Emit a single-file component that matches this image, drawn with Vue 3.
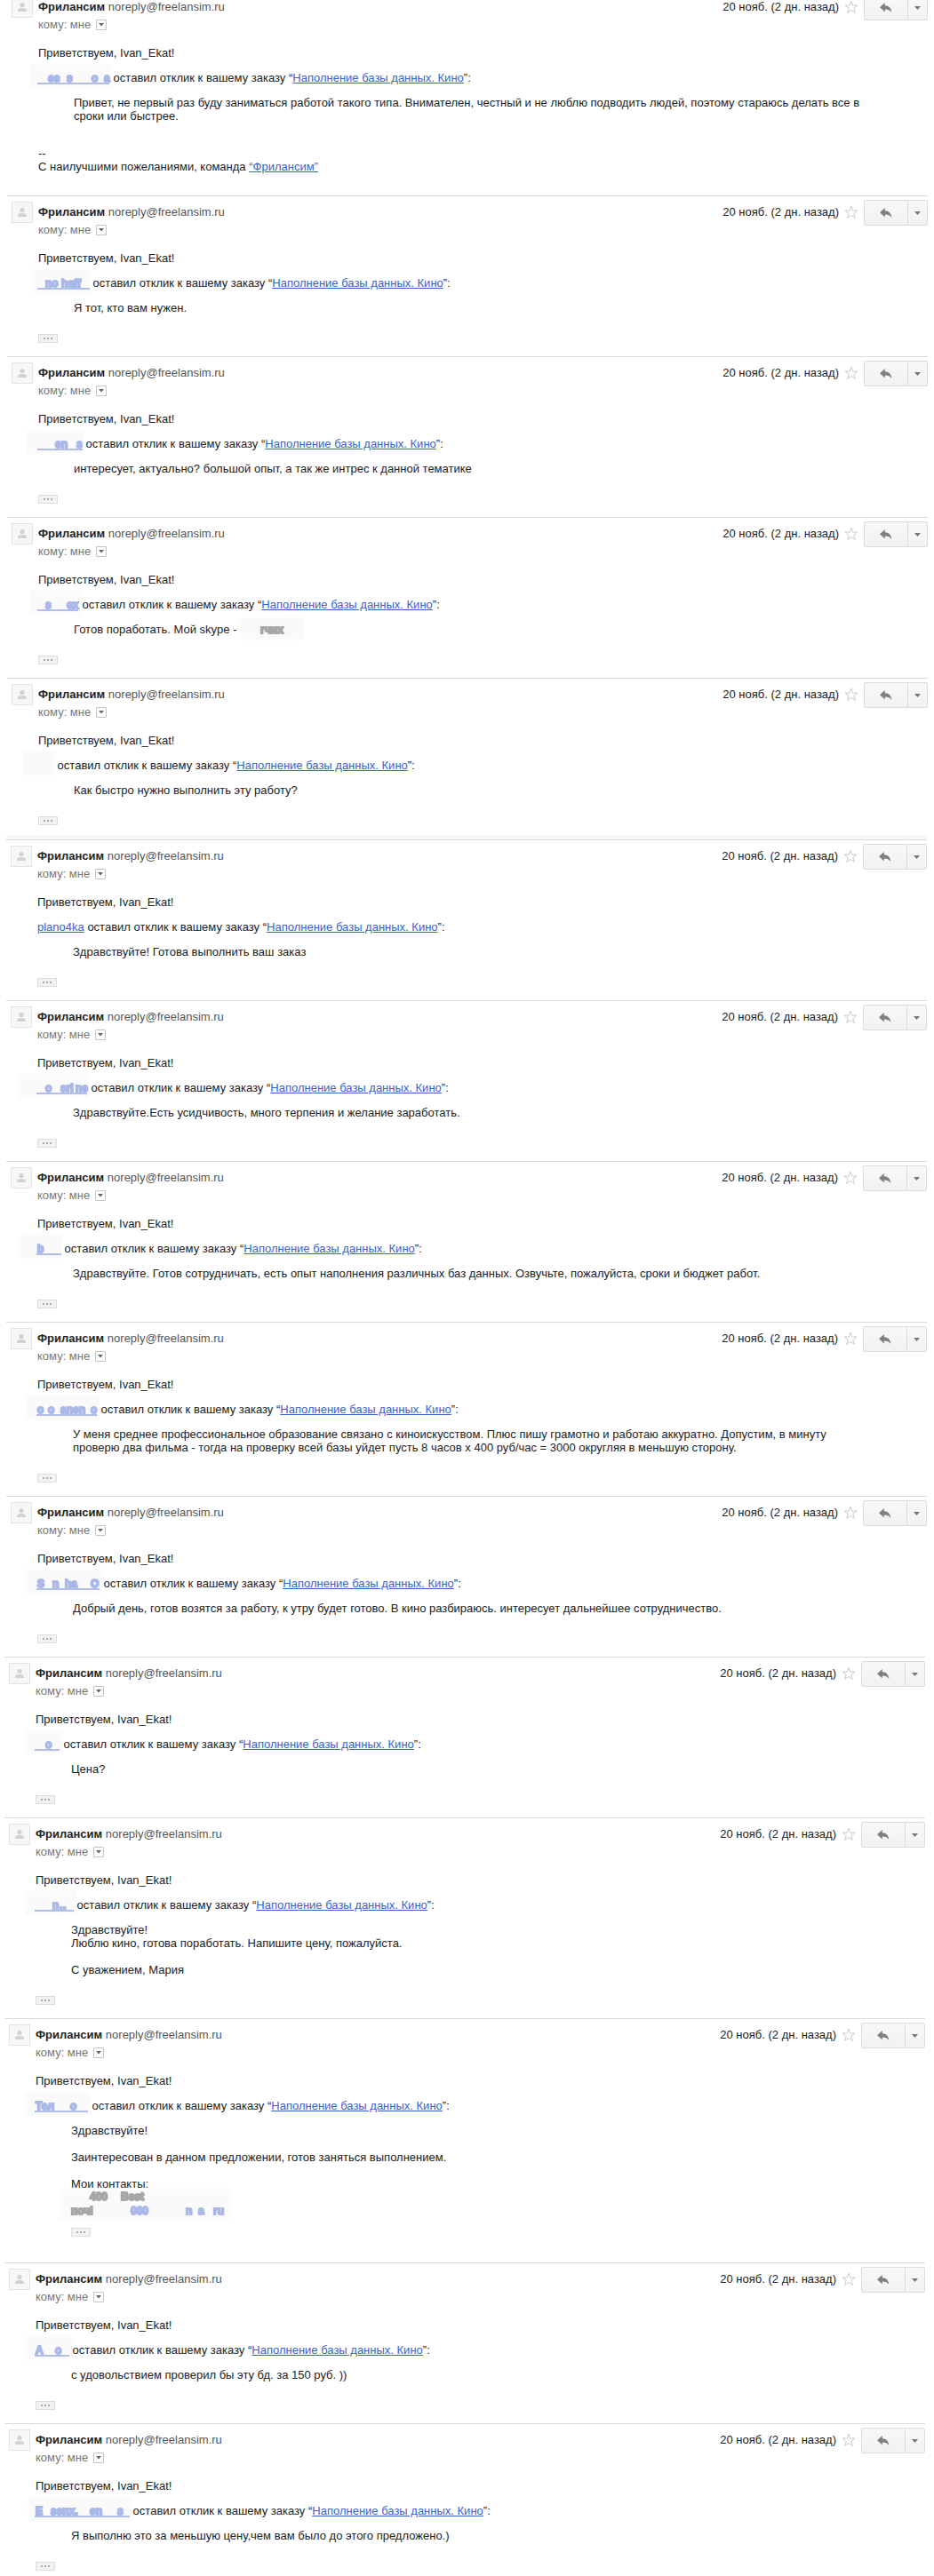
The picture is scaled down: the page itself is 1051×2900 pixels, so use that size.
<script setup>
const threads = [
  {
    name: 'first',
    messages: [
      {
        mask: { w: 81, left: -9, right: 82, line: 80, marks: [[11, 'es'], [32, 's'], [60, 'o'], [74, 'a']] },
        reply: 'Привет, не первый раз буду заниматься работой такого типа. Внимателен, честный и не люблю подводить людей, поэтому стараюсь делать все в\nсроки или быстрее.',
        signature: true
      },
      {
        mask: { w: 58, left: -6, right: 60, line: 58, marks: [[8, 'no'], [26, 'haff']] },
        reply: 'Я тот, кто вам нужен.'
      },
      {
        mask: { w: 50, left: -13, right: 51, line: 50, marks: [[19, 'en'], [43, 's']] },
        reply: 'интересует, актуально? большой опыт, а так же интрес к данной тематике'
      },
      {
        mask: { w: 46, left: -9, right: 48, line: 45, marks: [[8, 's'], [32, 'ex']] },
        reply: 'Готов поработать. Мой skype - ',
        skype: true
      },
      {
        mask: { w: 18, left: -17, right: 20, line: 0, marks: [] },
        reply: 'Как быстро нужно выполнить эту работу?'
      }
    ]
  },
  {
    name: 'second',
    messages: [
      { user: 'plano4ka', reply: 'Здравствуйте! Готова выполнить ваш заказ' },
      {
        mask: { w: 57, left: -21, right: 58, line: 56, marks: [[9, 'o'], [26, 'srl'], [43, 'ne']] },
        reply: 'Здравствуйте.Есть усидчивость, много терпения и желание заработать.'
      },
      {
        mask: { w: 27, left: -19, right: 28, line: 27, marks: [[0, 'b']] },
        reply: 'Здравствуйте. Готов сотрудничать, есть опыт наполнения различных баз данных. Озвучьте, пожалуйста, сроки и бюджет работ.'
      },
      {
        mask: { w: 68, left: -12, right: 69, line: 67, marks: [[0, 'o'], [12, 'o'], [26, 'anen'], [60, 'o']] },
        reply: 'У меня среднее профессиональное образование связано с киноискусством. Плюс пишу грамотно и работаю аккуратно. Допустим, в минуту\nпроверю два фильма - тогда на проверку всей базы уйдет пусть 8 часов х 400 руб/час = 3000 округляя в меньшую сторону.'
      },
      {
        mask: { w: 71, left: -14, right: 73, line: 70, marks: [[0, 'S'], [17, 'n'], [31, 'ha'], [60, 'O']] },
        reply: 'Добрый день, готов возятся за работу, к утру будет готово. В кино разбираюсь. интересует дальнейшее сотрудничество.'
      }
    ]
  },
  {
    name: 'third',
    messages: [
      {
        mask: { w: 28, left: -11, right: 31, line: 27, marks: [[11, 'o']] },
        reply: 'Цена?'
      },
      {
        mask: { w: 43, left: -12, right: 46, line: 43, marks: [[19, 'n'], [27, '.'], [31, '.']] },
        reply: 'Здравствуйте!\nЛюблю кино, готова поработать. Напишите цену, пожалуйста.\n\nС уважением, Мария'
      },
      {
        mask: { w: 60, left: -12, right: 62, line: 59, marks: [[0, 'Тел'], [39, 'o']] },
        reply: 'Здравствуйте!\n\nЗаинтересован в данном предложении, готов заняться выполнением.\n\nМои контакты:',
        contacts: true
      },
      {
        mask: { w: 38, left: -12, right: 41, line: 38, marks: [[0, 'A'], [22, 'o']] },
        reply: 'с удовольствием проверил бы эту бд. за 150 руб. ))'
      },
      {
        mask: { w: 106, left: -8, right: 108, line: 106, marks: [[0, 'E'], [17, 'ssnx.'], [61, 'en'], [92, 's']] },
        reply: 'Я выполню это за меньшую цену,чем вам было до этого предложено.)'
      }
    ]
  }
]
</script>

<template>
  <main class="mail">
    <section v-for="thread in threads" :key="thread.name" class="thread" :class="thread.name">
      <article v-for="(m, i) in thread.messages" :key="i" class="message">
        <header class="head">
          <svg class="avatar" viewBox="0 0 24 24" aria-hidden="true">
            <rect x=".5" y=".5" width="23" height="23" fill="#f7f7f7" stroke="#e4e4e4" />
            <circle cx="12" cy="9.500" r="2.600" fill="#d2d2d2" />
            <path d="M7 17v-1.500c0-1.700 2.200-2.500 5-2.500s5 .8 5 2.500V17z" fill="#d2d2d2" />
          </svg>
          <div class="who">
            <div class="from"><strong>Фрилансим</strong> <span class="email">noreply@freelansim.ru</span></div>
            <div class="to">
              <span>кому: мне</span>
              <button class="details" type="button" aria-label="Показать подробные сведения">
                <svg viewBox="0 0 6 4" width="6" height="4"><path d="M0 0h6L3 3.500z" fill="#666" /></svg>
              </button>
            </div>
          </div>
          <time class="date">20 нояб. (2 дн. назад)</time>
          <button class="star" type="button" aria-label="Пометить">
            <svg viewBox="0 0 16 16" width="16" height="16">
              <path d="M8 1.200l1.700 4.900h5.300l-4.200 3.200 1.600 5.200L8 11.400l-4.400 3.100 1.600-5.200L1 6.100h5.300z" fill="#fff" stroke="#ccc" />
            </svg>
          </button>
          <div class="actions">
            <button class="reply-btn" type="button" aria-label="Ответить">
              <svg viewBox="0 0 14 12" width="14" height="12">
                <path d="M0 5.200L5.800 0v3.200C10.300 3.400 12.800 6 13.400 11 11.600 8.300 9.400 7.400 5.800 7.400v3.200z" fill="#808080" />
              </svg>
            </button>
            <button class="more-btn" type="button" aria-label="Ещё">
              <svg viewBox="0 0 7 4" width="7" height="4"><path d="M0 0h7L3.500 4z" fill="#777" /></svg>
            </button>
          </div>
        </header>

        <div class="body">
          <p>Приветствуем, Ivan_Ekat!</p>
          <p>
            <a v-if="m.user" href="#">{{ m.user }}</a>
            <svg v-else class="mask" :width="m.mask.w" height="15" aria-hidden="true">
              <rect class="veil" :x="m.mask.left" y="-8" :width="m.mask.right - m.mask.left" height="27" />
              <g class="blue">
                <text v-for="mark in m.mask.marks" :key="mark[0]" :x="mark[0]" y="12">{{ mark[1] }}</text>
              </g>
              <rect v-if="m.mask.line" class="rule" x="-1" y="13" :width="m.mask.line + 1" height="2" />
            </svg>
            оставил отклик к вашему заказу “<a href="#">Наполнение базы данных. Кино</a>”:
          </p>
          <blockquote>{{ m.reply }}<svg v-if="m.skype" class="mask" width="72" height="15" aria-hidden="true">
              <rect class="veil" x="1" y="-6" width="71" height="25" />
              <g class="gray"><text x="23" y="12">гчих</text></g>
            </svg><svg v-if="m.contacts" class="mask contacts" width="180" height="30" aria-hidden="true">
              <rect class="veil" x="-12" y="-2" width="191" height="35" />
              <g class="gray">
                <text x="21" y="11">400</text><text x="56" y="11">Best</text><text x="0" y="27">почi</text>
              </g>
              <g class="blue">
                <text x="67" y="27">000</text><text x="129" y="27">n</text><text x="143" y="27">a</text><text x="160" y="27">ru</text>
              </g>
            </svg></blockquote>
          <div v-if="m.signature" class="signature">--<br>С наилучшими пожеланиями, команда <a href="#">“Фрилансим”</a></div>
          <button v-else class="trim" :class="{ nested: m.contacts }" type="button" aria-label="Показать скрытый текст">
            <i></i><i></i><i></i>
          </button>
        </div>
      </article>
    </section>
  </main>
</template>

<style>
body {
  margin: 0;
  background: #fff;
}
</style>

<style scoped>
.mail {
  overflow: hidden;
  font: 13px/15px "Liberation Sans", Arial, sans-serif;
  color: #222;
}
.thread.first { padding: 0 7px 0 8px; margin-top: -11px; }
.thread.second { padding: 0 8px 0 7px; }
.thread.second::before {
  content: "";
  display: block;
  height: 5px;
  background: #f6f6f6;
}
.thread.third { padding: 0 10px 0 5px; }
.message {
  border-top: 1px solid #dadada;
  padding-bottom: 15px;
}
.first .message:last-child { padding-bottom: 11px; }
.third .message:last-child { padding-bottom: 7px; }
.head {
  display: flex;
  align-items: flex-start;
  height: 62px;
}
.avatar {
  width: 24px;
  height: 24px;
  margin: 6px 6px 0 5px;
  flex: none;
}
.who { flex: 1; padding-top: 10px; }
.from { line-height: 16px; }
.email { color: #555; }
.to {
  display: flex;
  align-items: center;
  gap: 6px;
  margin-top: 4px;
  line-height: 16px;
  color: #777;
}
button {
  display: flex;
  align-items: center;
  justify-content: center;
  box-sizing: border-box;
  padding: 0;
  margin: 0;
  border: 0;
  background: none;
}
.details {
  width: 12px;
  height: 12px;
  border: 1px solid #c4c4c4;
  border-radius: 1px;
  background: #fff;
}
.date { padding-top: 10px; line-height: 16px; }
.star { margin: 10px 6px 0; }
.actions {
  display: flex;
  margin-top: 4px;
}
.actions button {
  height: 29px;
  border: 1px solid #dcdcdc;
  background: linear-gradient(#f8f8f8, #f2f2f2);
}
.actions .reply-btn { width: 50px; border-radius: 2px 0 0 2px; }
.actions .more-btn { width: 23px; margin-left: -1px; border-radius: 0 2px 2px 0; }
.body { padding-left: 35px; }
p { margin: 0 0 13px; white-space: nowrap; }
a { color: #3862d0; }
blockquote {
  margin: 0 0 0 40px;
  white-space: pre-line;
}
.signature { margin: 27px 0 10px; }
.trim {
  gap: 2px;
  width: 22px;
  height: 10px;
  margin-top: 22px;
  border: 1px solid #ddd;
  background: #f2f2f2;
}
.trim i {
  width: 2px;
  height: 2px;
  background: #aaa;
}
.trim.nested { margin: 12px 0 14px 40px; }
.mask {
  overflow: visible;
  vertical-align: top;
}
.mask.contacts { display: block; }
.mask text {
  font: bold 12px "Liberation Sans", Arial, sans-serif;
  stroke-width: 2px;
}
.blue { fill: #a9b8e8; stroke: #a9b8e8; filter: blur(0.6px); }
.gray { fill: #a6a6a6; stroke: #a6a6a6; filter: blur(0.6px); }
.veil { fill: #fafafa; filter: blur(1px); }
.rule { fill: #b0bee9; }
</style>
